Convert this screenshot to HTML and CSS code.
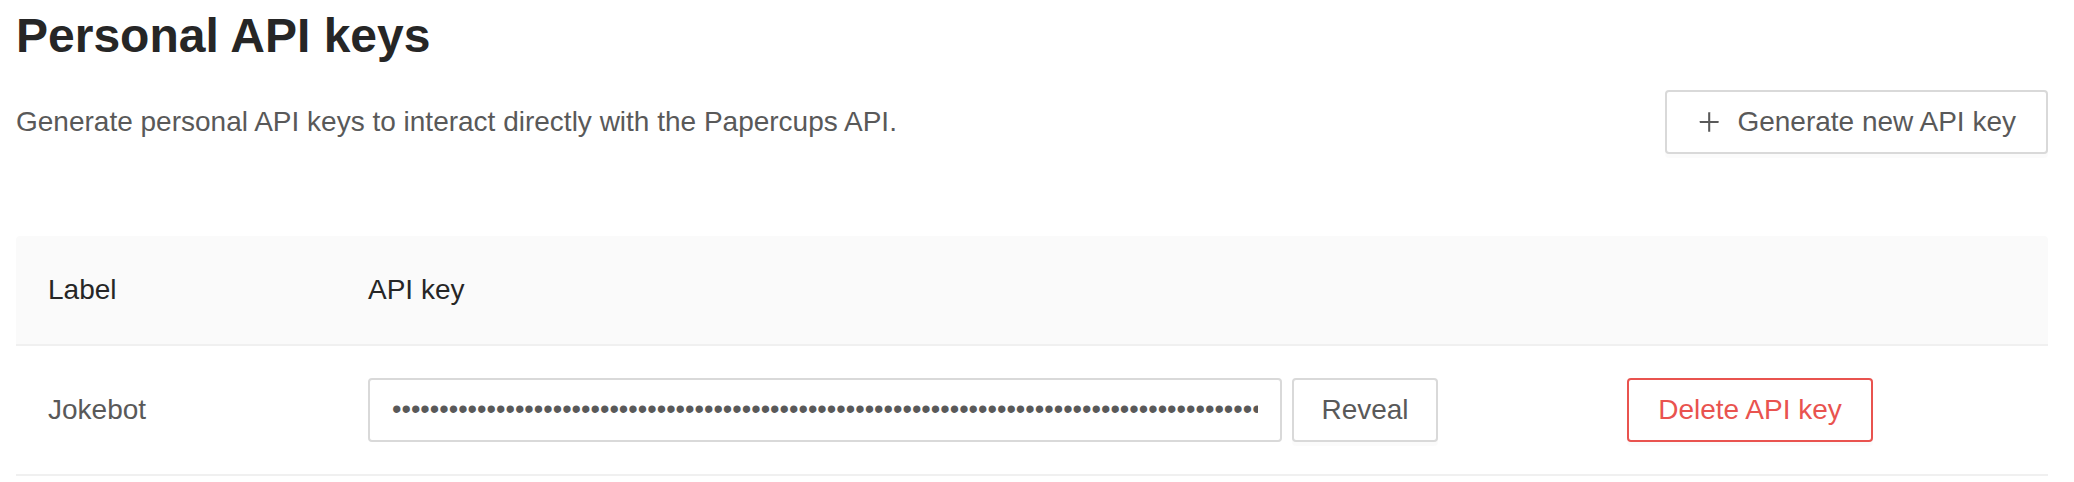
FILE: index.html
```html
<!DOCTYPE html>
<html lang="en">
<head>
<meta charset="utf-8">
<title>Personal API keys</title>
<link rel="stylesheet" href="styles.css">
</head>
<body>
<main class="page">
  <h3 class="title">Personal API keys</h3>
  <div class="intro">
    <p class="intro-text">Generate personal API keys to interact directly with the Papercups API.</p>
    <button class="btn btn-generate" type="button">
      <svg class="icon-plus" viewBox="64 64 896 896" aria-hidden="true"><path d="M482 152h60q8 0 8 8v704q0 8-8 8h-60q-8 0-8-8V160q0-8 8-8z"/><path d="M176 474h672q8 0 8 8v60q0 8-8 8H176q-8 0-8-8v-60q0-8 8-8z"/></svg>
      <span>Generate new API key</span>
    </button>
  </div>

  <div class="table">
    <div class="row head">
      <div class="cell">Label</div>
      <div class="cell">API key</div>
      <div class="cell"></div>
    </div>
    <div class="row body">
      <div class="cell label-cell">Jokebot</div>
      <div class="cell key-cell">
        <input class="key-input" type="password" readonly value="pk_live_0123456789abcdefghijklmnopqrstuvwxyzABCDEFGHIJKLMNOPQRSTUVWXYZ0123456789abcdefghijkl">
        <button class="btn btn-reveal" type="button">Reveal</button>
      </div>
      <div class="cell">
        <button class="btn btn-danger" type="button">Delete API key</button>
      </div>
    </div>
  </div>
</main>
</body>
</html>
```

FILE: styles.css
```css
* { box-sizing: border-box; }

html, body {
  margin: 0;
  background: #ffffff;
}

body {
  font-family: "Liberation Sans", Arial, Helvetica, sans-serif;
  color: #595959;
}

.page {
  padding: 4px 26px 0 16px;
}

.title {
  margin: 0 0 21px 0;
  font-size: 48px;
  line-height: 1.35;
  font-weight: 700;
  color: #262626;
}

.intro {
  display: flex;
  align-items: center;
  justify-content: space-between;
}

.intro-text {
  margin: 0;
  font-size: 28px;
  line-height: 44px;
  color: #595959;
}

.btn {
  display: inline-flex;
  align-items: center;
  justify-content: center;
  height: 64px;
  padding: 0 30px;
  border: 2px solid #d9d9d9;
  border-radius: 4px;
  background: #ffffff;
  color: #595959;
  font-family: inherit;
  font-size: 28px;
  line-height: 44px;
  box-shadow: 0 4px 0 rgba(0, 0, 0, 0.015);
  cursor: pointer;
  white-space: nowrap;
}

.btn-generate {
  width: 383px;
  gap: 16px;
}

.icon-plus {
  width: 28px;
  height: 28px;
  fill: #595959;
}

.table {
  margin-top: 82px;
}

.row {
  display: grid;
  grid-template-columns: 320px 1259px 1fr;
  border-bottom: 2px solid #f0f0f0;
}

.row.head {
  background: #fafafa;
  border-radius: 4px 4px 0 0;
  color: #262626;
}

.cell {
  padding: 32px;
  font-size: 28px;
  line-height: 44px;
}

.row.body .cell {
  display: flex;
  align-items: center;
  min-height: 128px;
}

.label-cell {
  color: #595959;
}

.key-cell {
  gap: 10px;
}

.key-input {
  width: 914px;
  height: 64px;
  padding: 0 22px;
  border: 2px solid #d9d9d9;
  border-radius: 4px;
  font-family: "Liberation Sans", Arial, sans-serif;
  font-size: 27px;
  letter-spacing: 0px;
  color: #595959;
  background: #ffffff;
  outline: none;
}

.btn-reveal {
  width: 146px;
  padding: 0;
}

.btn-danger {
  width: 246px;
  padding: 0;
  border-color: #e9534f;
  color: #e9534f;
}
```
